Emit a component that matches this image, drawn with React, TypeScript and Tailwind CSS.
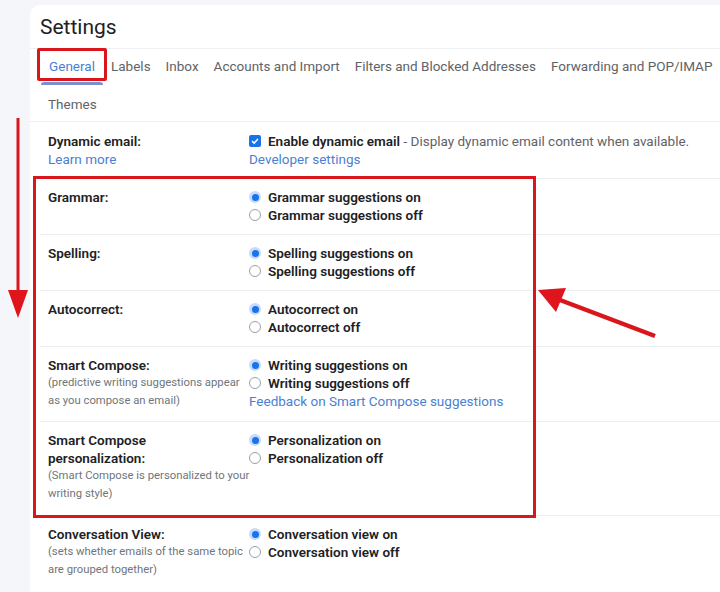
import type { ReactNode } from 'react';

const font = { fontFamily: 'Roboto, "Liberation Sans", sans-serif' };

function Radio({ checked }: { checked?: boolean }) {
  return checked ? (
    <span className="w-[12px] h-[12px] rounded-full bg-[#c6dafc] flex items-center justify-center shrink-0">
      <span className="w-[7px] h-[7px] rounded-full bg-[#1a73e8]" />
    </span>
  ) : (
    <span className="w-[12px] h-[12px] rounded-full border border-[#9aa0a6] bg-white shrink-0" />
  );
}

function Option({ checked, children }: { checked?: boolean; children: ReactNode }) {
  return (
    <div className="flex items-center gap-[7px] h-[18px]">
      <Radio checked={checked} />
      <span className="font-semibold text-[#202124]">{children}</span>
    </div>
  );
}

interface RowProps {
  label: ReactNode;
  sub?: ReactNode;
  link?: string;
  children: ReactNode;
  first?: boolean;
  pad?: string;
}

function Row({ label, sub, link, children, first, pad = 'pt-[9px] pb-[10px]' }: RowProps) {
  return (
    <div className={`ml-[10px] pl-[8px] flex ${pad} ${first ? '' : 'border-t border-[#eceff1]'}`}>
      <div className="w-[201px] shrink-0 leading-[18px]">
        <div className="font-semibold text-[#202124]">{label}</div>
        {sub && <div className="text-[11.3px] leading-[18px] text-[#70757a] whitespace-nowrap">{sub}</div>}
        {link && <div className="text-[#4a7fd4]">{link}</div>}
      </div>
      <div className="flex-1 leading-[18px]">{children}</div>
    </div>
  );
}

export default function App() {
  const tabs = [
    'Labels',
    'Inbox',
    'Accounts and Import',
    'Filters and Blocked Addresses',
    'Forwarding and POP/IMAP',
  ];

  return (
    <div
      className="relative w-[720px] h-[592px] bg-[#f4f6fa] pl-[30px] pt-[5px] overflow-hidden text-[13.5px]"
      style={font}
    >
      <div className="h-full bg-white rounded-tl-[10px]">
        <div className="h-[44px] pl-[10px] flex items-center border-b border-[#eef0f2]">
          <h1 className="text-[21px] text-[#202124] leading-none pt-[2px]">Settings</h1>
        </div>

        <div className="pl-[18px] border-b border-[#eceff1]">
          <div className="flex items-end h-[36px] gap-[15px] text-[#5f6368]">
            <div className="h-full -ml-[7px] -mr-[7px] flex flex-col items-center justify-end">
              <span className="text-[#4a7fd4] pb-[6px]">General</span>
              <span className="w-[62px] h-[3px] bg-[#7d8fd0] rounded-t" />
            </div>
            {tabs.map((t) => (
              <span key={t} className="pb-[9px] whitespace-nowrap">
                {t}
              </span>
            ))}
          </div>
          <div className="h-[36px] pt-[2px] flex items-center text-[#5f6368]">Themes</div>
        </div>

        <Row label="Dynamic email:" link="Learn more" first pad="pt-[10px] pb-[10px]">
          <div className="flex items-center gap-[7px] h-[18px] whitespace-nowrap">
            <span className="w-[12px] h-[12px] rounded-[2px] bg-[#1a73e8] flex items-center justify-center shrink-0">
              <svg viewBox="0 0 12 12" className="w-[10px] h-[10px]">
                <path d="M2.5 6.2 L5 8.5 L9.5 3.5" stroke="white" strokeWidth="1.8" fill="none" />
              </svg>
            </span>
            <span className="text-[#5f6368]">
              <span className="font-semibold text-[#202124]">Enable dynamic email</span> - Display dynamic email
              content when available.
            </span>
          </div>
          <div className="text-[#4a7fd4]">Developer settings</div>
        </Row>

        <Row label="Grammar:">
          <Option checked>Grammar suggestions on</Option>
          <Option>Grammar suggestions off</Option>
        </Row>

        <Row label="Spelling:">
          <Option checked>Spelling suggestions on</Option>
          <Option>Spelling suggestions off</Option>
        </Row>

        <Row label="Autocorrect:">
          <Option checked>Autocorrect on</Option>
          <Option>Autocorrect off</Option>
        </Row>

        <Row
          label="Smart Compose:"
          pad="pt-[9px] pb-[11px]"
          sub={
            <>
              (predictive writing suggestions appear
              <br />
              as you compose an email)
            </>
          }
        >
          <Option checked>Writing suggestions on</Option>
          <Option>Writing suggestions off</Option>
          <div className="text-[#4a7fd4]">Feedback on Smart Compose suggestions</div>
        </Row>

        <Row
          label={
            <>
              Smart Compose
              <br />
              personalization:
            </>
          }
          pad="pt-[9px] pb-[12px]"
          sub={
            <>
              (Smart Compose is personalized to your
              <br />
              writing style)
            </>
          }
        >
          <Option checked>Personalization on</Option>
          <Option>Personalization off</Option>
        </Row>

        <Row
          label="Conversation View:"
          sub={
            <>
              (sets whether emails of the same topic
              <br />
              are grouped together)
            </>
          }
        >
          <Option checked>Conversation view on</Option>
          <Option>Conversation view off</Option>
        </Row>
      </div>

      {/* red annotations */}
      <div className="absolute left-[37px] top-[48px] w-[70px] h-[33px] border-[3px] border-[#d9161c] rounded-[2px]" />
      <div className="absolute left-[33px] top-[176px] w-[503px] h-[342px] border-[3px] border-[#d9161c]" />
      <svg className="absolute left-0 top-0 pointer-events-none" width="720" height="592">
        <line x1="18" y1="118" x2="18" y2="292" stroke="#d9161c" strokeWidth="3" />
        <polygon points="8,290 28,290 18,318" fill="#e0141b" />
        <line x1="655" y1="336" x2="560" y2="300" stroke="#d9161c" strokeWidth="4.5" />
        <polygon points="538,290 566,288 556,312" fill="#e0141b" />
      </svg>
    </div>
  );
}
